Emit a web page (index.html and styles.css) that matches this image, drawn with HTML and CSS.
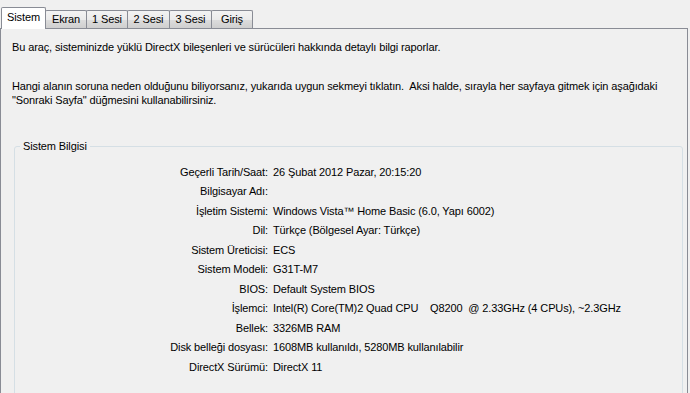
FILE: index.html
```html
<!DOCTYPE html>
<html lang="tr">
<head>
<meta charset="utf-8">
<title>DirectX Tanı Aracı</title>
<link rel="stylesheet" href="styles.css">
</head>
<body>
<div class="window">
  <div class="tabs">
    <div class="tab active w45">Sistem</div>
    <div class="tab w42">Ekran</div>
    <div class="tab w42">1 Sesi</div>
    <div class="tab w43">2 Sesi</div>
    <div class="tab w43">3 Sesi</div>
    <div class="tab w42">Giriş</div>
  </div>
  <div class="panel">
    <p class="intro">Bu araç, sisteminizde yüklü DirectX bileşenleri ve sürücüleri hakkında detaylı bilgi raporlar.</p>
    <p class="hint">Hangi alanın soruna neden olduğunu biliyorsanız, yukarıda uygun sekmeyi tıklatın.&nbsp; Aksi halde, sırayla her sayfaya gitmek için aşağıdaki<br>"Sonraki Sayfa" düğmesini kullanabilirsiniz.</p>
    <fieldset class="group">
      <legend>Sistem Bilgisi</legend>
      <div class="info">
        <div class="label">Geçerli Tarih/Saat:</div><div class="value">26 Şubat 2012 Pazar, 20:15:20</div>
        <div class="label">Bilgisayar Adı:</div><div class="value"></div>
        <div class="label">İşletim Sistemi:</div><div class="value">Windows Vista™ Home Basic (6.0, Yapı 6002)</div>
        <div class="label">Dil:</div><div class="value">Türkçe (Bölgesel Ayar: Türkçe)</div>
        <div class="label">Sistem Üreticisi:</div><div class="value">ECS</div>
        <div class="label">Sistem Modeli:</div><div class="value">G31T-M7</div>
        <div class="label">BIOS:</div><div class="value">Default System BIOS</div>
        <div class="label">İşlemci:</div><div class="value">Intel(R) Core(TM)2 Quad CPU&nbsp;&nbsp;&nbsp; Q8200&nbsp; @ 2.33GHz (4 CPUs), ~2.3GHz</div>
        <div class="label">Bellek:</div><div class="value">3326MB RAM</div>
        <div class="label">Disk belleği dosyası:</div><div class="value">1608MB kullanıldı, 5280MB kullanılabilir</div>
        <div class="label">DirectX Sürümü:</div><div class="value">DirectX 11</div>
      </div>
    </fieldset>
  </div>
</div>
</body>
</html>
```
FILE: styles.css
```css
html, body {
  margin: 0;
  padding: 0;
  background: #f0f0f0;
}
body {
  font-family: "Liberation Sans", Arial, sans-serif;
  font-size: 11px;
  letter-spacing: -0.12px;
  color: #000;
  width: 690px;
  height: 393px;
  overflow: hidden;
}
.window {
  width: 688px;
}
.tabs {
  display: flex;
  align-items: flex-end;
  height: 28px;
  padding-left: 1px;
  border-bottom: 1px solid #898c95;
  box-sizing: content-box;
}
.tab {
  box-sizing: border-box;
  height: 18px;
  line-height: 16px;
  text-align: center;
  border: 1px solid #898c95;
  border-bottom: none;
  margin-left: -1px;
  background: linear-gradient(#f3f3f3 0%, #ebebeb 50%, #dddddd 51%, #cfcfcf 100%);
  border-radius: 2px 2px 0 0;
}
.tab:first-child {
  margin-left: 0;
}
.tab.active {
  height: 22px;
  line-height: 19px;
  margin-bottom: -1px;
  background: #ffffff;
  position: relative;
  z-index: 1;
}
.w42 { width: 42px; }
.w43 { width: 43px; }
.w45 { width: 45px; }
.panel {
  border-left: 1px solid #898c95;
  border-right: 1px solid #898c95;
  height: 364px;
  padding: 11px 0 0 11px;
  box-sizing: border-box;
}
.intro, .hint {
  margin: 0;
  line-height: 14px;
}
.hint {
  margin-top: 25px;
}
.group {
  margin: 33px 4px 0 2px;
  padding: 9px 0 20px 0;
  border: 1px solid #d5dfe5;
  border-radius: 3px;
  min-width: 0;
}
.group legend {
  margin-left: 5px;
  padding: 0 3px;
  line-height: 13px;
}
.info {
  display: grid;
  grid-template-columns: 253px 1fr;
  column-gap: 5px;
  grid-auto-rows: 19.5px;
  align-items: center;
}
.label {
  text-align: right;
  white-space: nowrap;
}
.value {
  white-space: nowrap;
}
```
